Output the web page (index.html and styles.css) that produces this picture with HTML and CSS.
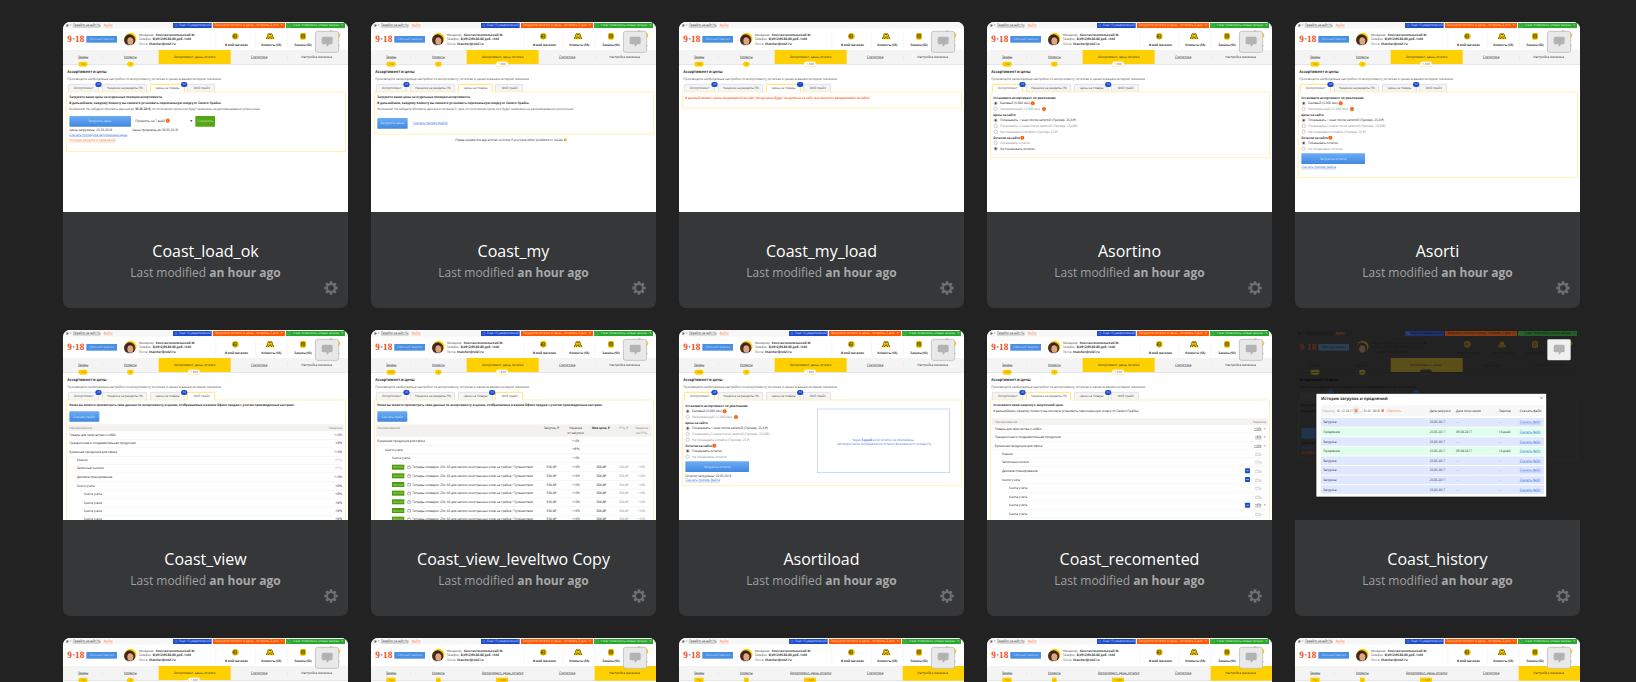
FILE: index.html
```html
<!DOCTYPE html>
<html lang="en">
<head>
<meta charset="utf-8">
<title>Screens</title>
<link rel="stylesheet" href="styles.css">
</head>
<body>
<main class="board" id="board"></main>
<script src="app.js"></script>
</body>
</html>
```

FILE: styles.css
```css
* { box-sizing: border-box; }
html, body { height: 100%; }
body {
  margin: 0;
  overflow: hidden;
  background: #222;
  font-family: "Open Sans", "Noto Sans", sans-serif;
}
.board {
  display: grid;
  grid-template-columns: repeat(5, 285px);
  grid-auto-rows: 286px;
  gap: 22px 23px;
  height: 100%;
  overflow: hidden;
  padding: 22px 0 0 63px;
}
.card {
  display: flex;
  flex-direction: column;
  position: relative;
  background: #363738;
  border-radius: 7px;
  overflow: hidden;
}
.thumb { flex: 0 0 190px; background: #fff; }
.thumb-dark { background: #222; }
.thumb svg { display: block; width: 285px; height: 190px; text-rendering: geometricPrecision; }
.info {
  flex: 1;
  display: flex;
  flex-direction: column;
  align-items: center;
  padding-top: 27px;
}
.title { margin: 0; font-size: 16px; line-height: 24px; font-weight: 400; color: #fff; }
.modified { margin: 0; font-size: 12px; line-height: 20px; color: #a0a0a0; }
.modified b { font-weight: 700; color: #a8a8a8; }
.gear { position: absolute; right: 10px; bottom: 13px; width: 14px; height: 14px; }
```

FILE: app.js
```js
const BLUE = '#1c4bcb', ORANGE = '#ff5a00', YELLOW = '#ffd000', PALE = '#fff0a8', INK = '#2b2b2b', GREY = '#8c8c8c';

/* Text from x1 to x2, centred vertically on y. */
function t(x1, x2, y, s, o = {}) {
  const size = o.size || 10;
  const line = o.u ? ' text-decoration="underline"' : '';
  return `<text x="${x1}" y="${y + size * 0.34}" textLength="${x2 - x1}" lengthAdjust="spacingAndGlyphs" font-size="${size}" font-weight="${o.b ? 700 : 400}" fill="${o.c || INK}"${o.f ? ` font-family="${o.f}"` : ''}${line}>${s}</text>`;
}
function r(x, y, w, h, fill, o = {}) {
  return `<rect x="${x}" y="${y}" width="${w}" height="${h}" rx="${o.rx || 0}" fill="${fill}"${o.s ? ` stroke="${o.s}" stroke-width="${o.sw || 2}"` : ''}/>`;
}
const link = { c: '#3b73e0', u: 1 };
const warn = (x, y) => `<circle cx="${x}" cy="${y}" r="6" fill="${ORANGE}"/>` + r(x - 0.7, y - 3, 1.4, 6, '#ffb080');
const button = (x, y, w, h, x1, x2, s) => r(x, y, w, h, 'url(#btn)', { rx: 2 }) + t(x1, x2, y + h / 2, s, { c: '#cfe4ff' });
const comment = flat => r(757, 28, 70, 63, flat ? '#f0f0f0' : '#e9e9e9', flat ? { rx: 4 } : { rx: 7, s: '#bdbdbd', sw: 2.5 }) +
  '<path d="M781 44h23q5 0 5 5v13q0 5-5 5h-6q-2 6-7 8v-8h-10q-5 0-5-5v-13q0-5 5-5z" fill="#b3b3b3"/>';

function topbar(notices) {
  let s = t(10, 17, 10, 'P', { b: 1, size: 11, c: '#111', f: 'Liberation Serif' }) + t(21, 25, 10, 'г', { size: 8 }) +
    t(30, 112, 10, 'Перейти на сайт РЦ', { u: 1 }) + t(122, 149, 10, 'Выйти', { c: '#ff7433', u: 1 });
  if (notices) {
    s += r(330, 3, 116, 15, BLUE) + '<circle cx="339" cy="10" r="3.5" fill="none" stroke="#9db7ff"/>' + t(348, 443, 10, 'Ещё 15 уведомлений', { c: '#c9d6ff' }) +
      r(450, 3, 216, 15, ORANGE) + t(456, 646, 10, 'Загрузите остатки и цены - осталось 2 дня', { c: '#ffd9c4' }) + t(653, 659, 10, '×', { c: '#fff' }) +
      r(669, 3, 177, 15, '#2aa62e') + '<circle cx="677" cy="10" r="5" fill="none" stroke="#8fe08f"/>' + t(689, 828, 10, 'У вас появились новые заказы', { c: '#c6f0c6' }) + t(835, 841, 10, '×', { c: '#fff' });
  }
  return s;
}
const logo = () => t(13, 64, 51, '9<tspan fill="#2c7de0">·</tspan>18', { b: 1, size: 29, c: '#f04e10', f: 'Liberation Serif' });
function header() {
  const sep = x => r(x, 32, 1.5, 46, '#ededed');
  const b = { b: 1, c: '#333' }, n = { c: '#555' };
  return logo() +
    r(70, 42, 92, 20, '#4a90e2') + t(79, 153, 52, 'Офисный квартал', { c: '#b4d4fb' }) + sep(175) +
    `<circle cx="203" cy="50" r="17.5" fill="${YELLOW}"/><circle cx="200" cy="54" r="17" fill="#4b2a1c"/><ellipse cx="202" cy="56" rx="9" ry="12" fill="#dca584"/><path d="M191 55q-1-15 9-16 10-1 12 14-5-8-12-7-6 0-9 9z" fill="#3a2118"/><path d="M189 67q12 5 23-1-4 7-12 6-7 0-11-5z" fill="#eee"/>` +
    t(227, 274, 38, 'Менеджер:', n) + t(278, 396, 38, 'Константинопольский М.', b) +
    t(227, 266, 52, 'Телефон:', n) + t(269, 384, 52, '8(4912)95-80-80 доб. 1440', b) +
    t(227, 255, 66, 'Почта:', n) + t(258, 338, 66, 'thatcher@relef.ru', b) +
    sep(458) + sep(576) + sep(673) +
    `<circle cx="517" cy="43" r="10" fill="#efc400"/><path d="M512 38h9v10h-9zM509 43h8m-3-3l3 3-3 3" fill="none" stroke="#4a3c00" stroke-width="2"/>` +
    `<path d="M609 52q0-9 6-9-2-9 6-10 8 1 6 10 6 0 6 9z" fill="#efc400"/><path d="M610 51q1-7 5-7-4-4 0-8t6 3q2-6 6-3t0 8q5 0 6 7M616 51q1-6 5-6t5 6" fill="none" stroke="#4a3c00" stroke-width="2"/>` +
    `<rect x="711" y="33" width="18" height="20" rx="5" fill="#efc400"/><path d="M715 37h10v11h-10zM720 37v11M715 42h10" fill="none" stroke="#4a3c00" stroke-width="1.8"/>` +
    t(486, 555, 69, 'В мой магазин', b) + t(595, 655, 69, 'Клиенты (55)', b) + t(694, 746, 69, 'Заказы (55)', b) +
    `<circle cx="824" cy="40" r="8" fill="${YELLOW}"/>` + r(801, 26, 7, 4, ORANGE) + t(823, 829, 69, 'ь', b);
}
function nav(o) {
  const settings = o.nav === 'settings', rx = settings ? 0 : 7;
  const badge = (c, w, s, tw, fill = YELLOW) => r(c - w / 2, 119, w, 15, fill, { rx }) + t(c - tw / 2, c + tw / 2, 126.5, s, { c: '#8a6c00', size: 9 });
  let s = settings ? r(671, 84, 184, 44, YELLOW) : r(287, 84, 216, 42, YELLOW);
  s += r(118, 99, 1, 12, '#ddd') + r(674, 99, 1, 12, settings ? YELLOW : '#ddd') +
    t(45, 76, 105, 'Заказы', { u: 1 }) + t(183, 221, 105, 'Клиенты', { u: 1 }) +
    (o.short ? t(345, 438, 105, 'Ассортимент и цены') : t(333, 457, 105, 'Ассортимент, цены, остатки', { u: settings })) +
    t(564, 613, 105, 'Статистика', { u: 1 }) + t(715, 807, 105, 'Настройка магазина') +
    badge(60, 28, '152', 15) + badge(202, settings ? 14 : 20, '2', 5);
  if (settings) s += badge(393, 36, '1 800', 24);
  else if (!o.noCount) s += r(375, 119, 36, 15, '#fff', { rx: 7, s: '#ffe680' }) + t(382, 405, 126.5, '1 800', { size: 9, c: '#666' });
  return s;
}
function tabs(active, badge2, end) {
  const list = [[16, 91, 33, 91, 'Ассортимент'], [118, 133, 132, 240, 'Наценка на разделы (%)'], [262, 102, 278, 350, 'Цены на товары'], [373, 82, 392, 441, 'Мой прайс']];
  let s = '';
  const tab = (d, on) => `<path d="M${d[0]} 210v-20q0-3 3-3h${d[1] - 6}q3 0 3 3v20" fill="${on ? '#fff' : '#f5f5f5'}" stroke="${on ? '#ffdf5c' : '#d4d4d4'}" stroke-width="${on ? 2.5 : 1.8}"/>` + t(d[2], d[3], 199, d[4], { c: '#555' });
  list.forEach((d, i) => { s += tab(d, i === active); });
  s += r(11, 210, 837, end - 210, '#fff', { s: PALE, sw: 2.5 });
  const d = list[active];
  s += r(d[0] + 1.5, 207, d[1] - 3, 5, '#fff');
  s += r(97, 180, 19, 15, BLUE, { rx: 7 }) + t(102, 111, 187.5, '28', { c: '#b9c9ff', size: 8.5 });
  if (badge2) s += r(354, 180, 19, 15, BLUE, { rx: 7 }) + t(359, 368, 187.5, badge2, { c: '#b9c9ff', size: 8.5 });
  return s;
}
function page(o, body = '') {
  return r(0, 0, 855, 20, '#f7f7f7') + topbar(!o.quiet) + header() + r(0, 84, 855, 43, '#f4f4f4') + r(0, 126, 855, 2, '#dcdcdc') + nav(o) + intro() + body + comment();
}
const intro = () => t(13, 131, 148, 'Ассортимент и цены', { b: 1, size: 12 }) +
  t(13, 474, 170, 'Производите необходимые настройки по ассортименту, остаткам и ценам в вашем интернет магазине', { c: '#555' });

const loadText = () => t(19, 299, 226, 'Загрузите ваши цены на отдельные позиции ассортимента.', { b: 1 }) +
  t(19, 475, 244, 'В дальнейшем, каждому Клиенту вы сможете установить персональную скидку от Своего Прайса.', { b: 1 });

function options(show) {
  const radio = (y, on) => `<circle cx="26" cy="${y}" r="5" fill="#fff" stroke="#999" stroke-width="1.4"/>` + (on ? `<circle cx="26" cy="${y}" r="3.2" fill="#444"/>` : '');
  const row = (y, x, on, s) => radio(y, on) + t(39, x, y, s, { c: on ? INK : GREY });
  return t(19, 206, 228, 'Установите ассортимент по умолчанию', { b: 1 }) +
    row(244, 128, 1, 'Базовый (5 000 sku)') + warn(137, 244) + row(261, 159, 0, 'Расширенный (12 000 sku)') + warn(171, 261) +
    t(19, 86, 279, 'Цены на сайте', { b: 1 }) +
    row(295, 267, 1, 'Показывать 1 знак после запятой  (Пример: 25,6 ₽)') +
    row(312, 271, 0, 'Показывать 2 знака после запятой (Пример: 25,63₽)') +
    row(329, 212, 0, 'Не показывать копейки (Пример: 25 ₽)') +
    t(19, 99, 347, 'Остатки на сайте', { b: 1 }) + warn(106, 347) +
    row(363, 129, show, 'Показывать остатки') + row(380, 143, !show, 'Не показывать остатки');
}
const rule = (x, y, w = 837) => r(x, y, w - x, 1.3, '#ececec');
const goods = [[19, 159, 'Товары для творчества и хобби', '+10%'], [19, 218, 'Праздничная и поздравительная продукция', '+8%'], [19, 162, 'Бумажная продукция для офиса', '+10%'],
  [42, 74, 'Бланки', 'РРЦ'], [42, 122, 'Записные книжки', 'РРЦ'], [42, 148, 'Деловое планирование', '+10%'], [42, 95, 'Книги учета', '+8%'],
  [63, 117, 'Книга учета', '+8%'], [63, 117, 'Книга учета', '+8%'], [63, 117, 'Книга учета', '+8%'], [63, 117, 'Книга учета', '+8%']];

const views = {
  loadOk: () => page({ noCount: 1 }, tabs(2, '62', 388) + loadText() +
    t(19, 592, 261, 'Внимание! Не забудьте обновить данные до <tspan font-weight="700">30.05.2018</tspan>, по истечению срока они будут заменены на рекомендованно-розничные.', { c: '#555' }) +
    button(19, 282, 185, 32, 75, 145, 'Загрузить цены') + r(206, 282, 187, 32, '#fff', { s: '#f6f6f6', sw: 1 }) +
    t(217, 306, 297, 'Продлить на 7 дней') + warn(314, 296) + t(381, 388, 297, '▾') +
    r(397, 282, 59, 32, '#55a516', { rx: 2 }) + t(403, 450, 298, 'Сохранить', { c: '#c6ea9f' }) +
    t(19, 147, 324, 'Цены загружены: 25.05.2018') + t(208, 344, 324, 'Цены продлены до 30.05.2018') +
    t(19, 193, 339, 'Скачать последние загруженные цены', link) + t(19, 158, 355, 'История загрузок и продлений', { c: '#ff7433', u: 1 })),
  my: () => page({}, tabs(2, '', 336) + loadText() +
    t(19, 609, 261, 'Внимание! Не забудьте обновить данные в течение 21 дня, по истечению срока они будут заменены на рекомендованно-розничные.', { c: '#555' }) +
    button(19, 288, 91, 32, 28, 99, 'Загрузить цены') + t(126, 229, 303, 'Скачать пример файла', link) +
    t(253, 575, 353, 'Please update the app and let us know if you have other problems or issues') + '<circle cx="583" cy="353" r="4.5" fill="#ffb92e"/><path d="M580 354q3 3 6 0" fill="none" stroke="#7a4a00"/>'),
  myLoad: () => page({ quiet: 1 }, tabs(2, '•••', 258) + t(19, 574, 228, 'В данный момент цены загружаются на сайт. Когда цены будут загружены на сайт, вы получите уведомление на сайте.', { c: '#ff6a2c', b: 1 })),
  asortino: () => page({}, tabs(0, '62', 407) + options(0)),
  asorti: () => page({}, tabs(0, '62', 467) + options(1) + button(19, 394, 191, 32, 74, 155, 'Загрузить остатки') + t(19, 123, 436, 'Скачать пример файла', link)),
  asortiload: () => page({}, tabs(0, '62', 467) + options(1) + button(19, 394, 191, 32, 74, 155, 'Загрузить остатки') +
    t(19, 157, 437, 'Остатки загружены: 20.05.2018') + t(19, 123, 451, 'Скачать пример файла', link) +
    r(415, 237, 397, 191, '#fff', { s: '#b3c7f5' }) +
    t(519, 709, 329, 'Через <tspan font-weight="700">3 дней</tspan> если остатки не обновлены -', { c: '#4f7be0' }) +
    t(475, 756, 342, 'автоматически отображаются остатки филиального склада РЦ', { c: '#4f7be0' })),
  view: () => page({}, tabs(3, '62', 600) + t(19, 695, 226, 'Ниже вы можете просмотреть свои данные по ассортименту и ценам, отображаемые в вашем Офисе продаж с учетом произведенных настроек.', { b: 1 }) +
    button(19, 244, 90, 31, 31, 96, 'Скачать прайс') + r(15, 283, 827, 20, '#f3f2ee') + t(19, 87, 293, 'Наименование', { c: '#888' }) + t(797, 837, 293, 'Наценка', { c: '#888' }) +
    goods.map((g, i) => { const y = [314, 340, 365, 390, 415, 441, 467, 493, 518, 544, 568][i]; return t(g[0], g[1], y, g[2]) + t(g[3].length > 3 ? 814 : 817, 837, y, g[3], { c: g[3] === 'РРЦ' ? '#aaa' : INK }) + rule(g[0], y + 13); }).join('')),
  levelTwo: () => {
    let s = tabs(3, '62', 600) + t(19, 695, 226, 'Ниже вы можете просмотреть свои данные по ассортименту и ценам, отображаемые в вашем Офисе продаж с учетом произведенных настроек.', { b: 1 }) +
      button(19, 244, 90, 31, 31, 96, 'Скачать прайс') + r(15, 283, 828, 37, '#f3f2ee') + t(19, 87, 294, 'Наименование', { c: '#888' }) +
      t(518, 564, 295, 'Закупка, ₽', { c: '#333' }) + t(594, 633, 295, 'Наценка', { c: '#333' }) + t(589, 638, 308, 'от закупки', { c: '#333' }) + t(663, 716, 295, 'Моя цена, ₽', { b: 1 }) +
      t(744, 772, 295, 'РРЦ, ₽', { c: GREY }) + t(792, 831, 295, 'Наценка', { c: GREY }) + t(794, 828, 308, 'на РРЦ', { c: GREY });
    [[19, 162, 334, 'Бумажная продукция для офиса', '+10%'], [42, 95, 359, 'Книги учета', '+8%'], [63, 117, 385, 'Книга учета', '+10%']]
      .forEach(g => { s += t(g[0], g[1], g[2], g[3]) + t(604, 625, g[2] - 1, g[4]) + rule(g[0], g[2] + 12); });
    for (let i = 0; i < 7; i++) {
      const y = 412 + i * 26;
      s += r(63, y - 8, 37, 15, '#4b9a0b') + t(66, 97, y, '8095400', { c: '#c0e39a', size: 9 }) + `<path d="M110 ${y - 3}h9v7h-9zM112 ${y - 4}h5" fill="none" stroke="#666" stroke-width="1.3"/>` +
        t(124, 486, y, 'Тетрадь-словарик 23л. А5 для записи иностранных слов на гребне "Путешествия') +
        t(526, 556, y, '356,6₽') + t(603, 626, y, '+10%') + t(676, 705, y, '356,6₽', { c: '#111' }) + t(744, 772, y, '356,6₽', { c: GREY }) + t(800, 823, y, '+10%', { c: GREY }) + rule(63, y + 13);
    }
    return page({}, s);
  },
  recommended: () => page({}, tabs(1, '62', 600) + t(19, 230, 226, 'Установите свою наценку к закупочной цене.', { b: 1 }) +
    t(19, 456, 244, 'В дальнейшем, каждому Клиенту вы сможете установить персональную скидку от Своего Прайса.') +
    r(15, 265, 828, 20, '#f3f2ee') + t(23, 91, 275, 'Наименование', { c: '#888' }) + t(797, 837, 275, 'Наценка', { c: '#888' }) +
    goods.map((g, i) => {
      const y = [296, 322, 347, 371, 397, 423, 449, 475, 500, 526, 551][i], x = g[0] < 30 ? 23 : g[0] + 3;
      const edit = i < 3 || i === 9, v = edit ? (i === 1 || i === 9 ? '+8%' : '+10%') : 'РРЦ';
      return t(x, g[1] + 4, y, g[2]) + t(v.length > 3 ? 801 : 804, 823, y, v, { c: edit ? INK : '#999', u: 1 }) + (edit ? t(830, 836, y, '×') : '') +
        ([5, 6, 9].includes(i) ? r(774, y - 8, 15, 15, BLUE, { rx: 2 }) + r(777, y - 1.5, 9, 2, '#b7c8ff') : '') + rule(x - 4, y + 12, 839);
    }).join('')),
  history: () => {
    const back = `<g opacity="0.3">${r(10, 210, 838, 177, 'none', { s: '#453d13' })}${r(16, 187, 91, 22, '#333')}${r(97, 180, 19, 15, BLUE, { rx: 7 })}${r(354, 180, 19, 15, BLUE, { rx: 7 })}${r(19, 294, 70, 32, '#1e5fb4')}</g>`;
    const dim = s => s.replace(/fill="#(ededed|ddd|eee)"/g, 'fill="#2d2d2d"').replace(/fill="#fff"/g, 'fill="#333"').replace(/stroke="#ffe680"/g, 'stroke="#554a10"').replace(/(<text[^>]*fill=")#(555|333|2b2b2b|111|666|c9d6ff|ffd9c4|c6f0c6|b4d4fb)"/g, '$1#000"');
    let s = back + `<g opacity="0.45">${dim(topbar(1))}</g><g opacity="0.26">${dim(header())}${dim(nav({ short: 1 }))}</g>` + r(0, 126, 855, 1.5, '#1c1c1c') +
      t(13, 131, 148, 'Ассортимент и цены', { b: 1, size: 12, c: '#080808' }) + t(13, 362, 170, 'В данном разделе Вы можете управлять ценообразованием и ассортиментом', { c: '#0c0c0c' }) +
      t(19, 58, 226, 'Загрузите', { c: '#0c0c0c' }) + t(19, 60, 244, 'В дальней', { c: '#0c0c0c' }) + t(19, 60, 338, 'Прайс заг', { c: '#0c0c0c' }) + t(19, 60, 352, 'Скачать п', { c: '#173d7c', u: 1 }) + t(19, 60, 365, 'История за', { c: '#72300f', u: 1 }) +
      r(63, 190, 692, 311, '#fff', { s: '#141414', sw: 2 }) + t(78, 278, 207, 'История загрузок и продлений', { b: 1, size: 13 }) + '<path d="M736 200l7 7M743 200l-7 7" stroke="#666" stroke-width="1.6"/>' +
      r(78, 225, 669, 34, '#f7f7f7') + t(82, 118, 242, 'Период', { c: '#aaa' }) + r(123, 233, 52, 18, '#fff') + t(126, 173, 242, '01.12.2017') + r(175, 233, 16, 18, '#e2e2e2') + r(179, 238, 8, 8, '#ff8c45') +
      t(195, 200, 242, '–') + r(204, 233, 66, 18, '#fff') + t(206, 254, 242, '01.01.2018') + r(259, 238, 8, 8, '#ff8c45') + t(277, 318, 242, 'Сбросить', { c: '#ff7433' }) +
      t(404, 467, 242, 'Дата загрузки') + t(483, 557, 242, 'Дата окончания') + t(611, 647, 242, 'Период') + t(674, 739, 242, 'Скачать файл');
    for (let i = 0; i < 8; i++) {
      const y = 277 + i * 28.8, ext = i === 1 || i === 3;
      s += r(78, y - 13, 669, 26, ext ? '#e0ffec' : '#e0e8ff') + t(85, ext ? 135 : 124, y, ext ? 'Продление' : 'Загрузка') + t(404, 451, y, '25.05.2017') +
        (ext ? t(483, 531, y, '09.06.2017') + t(611, 646, y, '14 дней') : t(484, 493, y, '—', { c: '#888' }) + t(611, 620, y, '—', { c: '#888' })) + t(674, 736, y, 'Скачать файл', link);
    }
    return s + comment(true);
  },
  plain: () => page({}),
  settings: () => page({ nav: 'settings' })
};

const cards = [
  ['Coast_load_ok', 'loadOk'], ['Coast_my', 'my'], ['Coast_my_load', 'myLoad'], ['Asortino', 'asortino'], ['Asorti', 'asorti'],
  ['Coast_view', 'view'], ['Coast_view_leveltwo Copy', 'levelTwo'], ['Asortiload', 'asortiload'], ['Coast_recomented', 'recommended'], ['Coast_history', 'history'],
  ['', 'plain'], ['', 'settings'], ['', 'settings'], ['', 'settings'], ['', 'settings']
];
let teeth = '';
for (let a = 0; a < 360; a += 45) teeth += `<path d="M-1.2 -6.7h2.4l.4 3h-3.2z" transform="rotate(${a})"/>`;
const gear = `<svg class="gear" viewBox="-7 -7 14 14"><g fill="#6f7172">${teeth}</g><circle r="3.8" fill="none" stroke="#6f7172" stroke-width="1.7"/></svg>`;
const defs = '<defs><linearGradient id="btn" x1="0" y1="0" x2="0" y2="1"><stop offset="0" stop-color="#6cacf5"/><stop offset="1" stop-color="#4088e0"/></linearGradient></defs>';

document.getElementById('board').innerHTML = cards.map(([title, view]) => `<article class="card">
  <div class="thumb${view === 'history' ? ' thumb-dark' : ''}"><svg viewBox="0 0 855 570">${defs}${views[view]()}</svg></div>
  ${title ? `<div class="info"><h2 class="title">${title}</h2><p class="modified">Last modified <b>an hour ago</b></p></div>${gear}` : ''}
</article>`).join('');
```
